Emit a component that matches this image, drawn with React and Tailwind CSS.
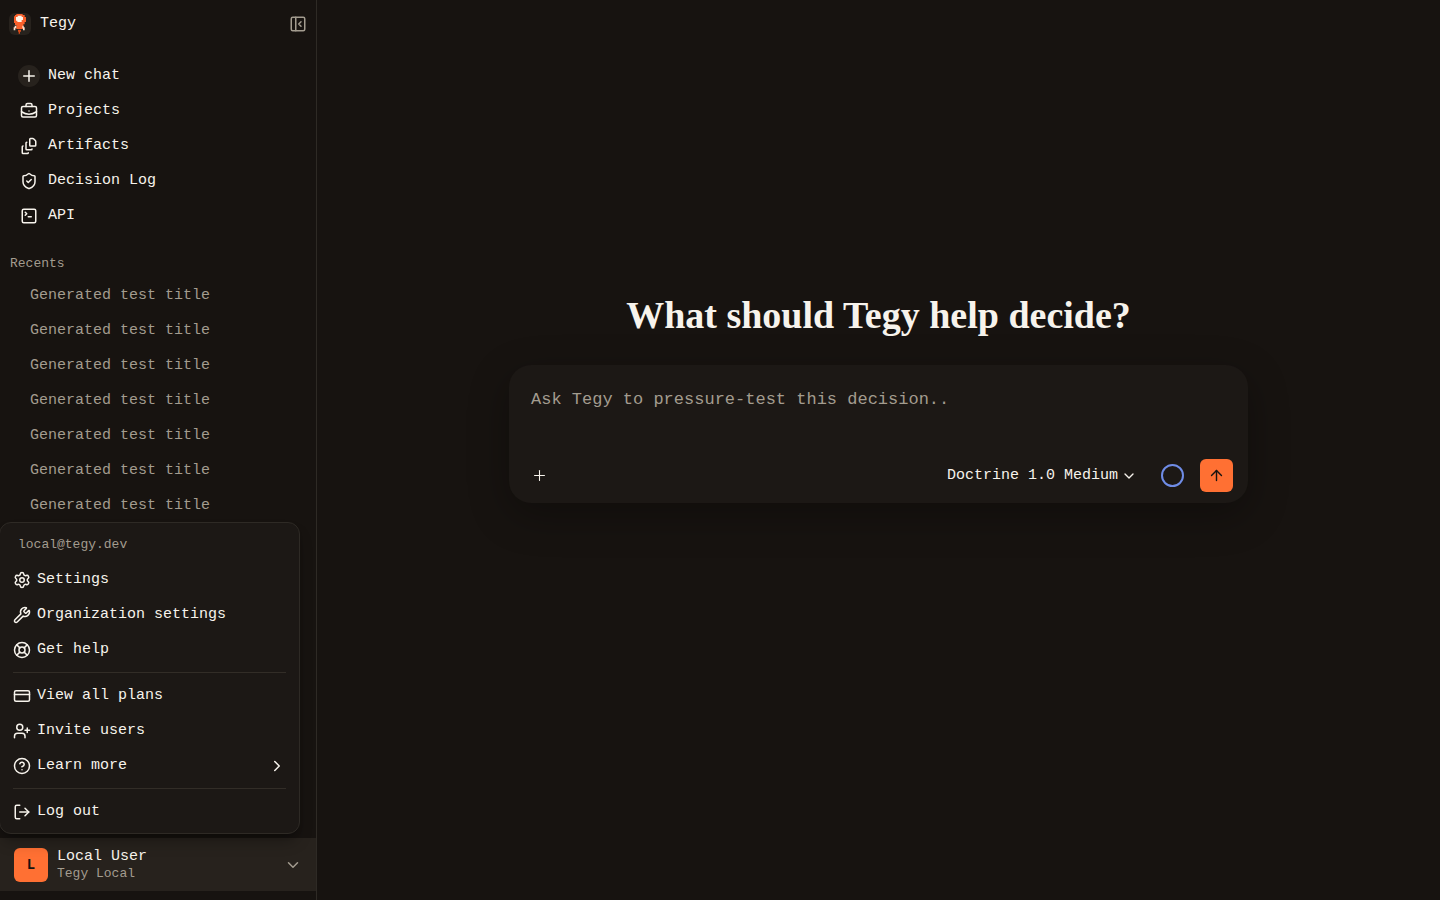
import { useState } from 'react'
import {
  ArrowUp, BriefcaseBusiness, ChevronDown, ChevronRight, CircleHelp, CreditCard, FileStack, LifeBuoy,
  LogOut, PanelLeftClose, Plus, Settings, ShieldCheck, SquareTerminal, UserPlus, Wrench,
} from 'lucide-react'

const NAV = [
  { label: 'New chat', icon: Plus, round: true },
  { label: 'Projects', icon: BriefcaseBusiness },
  { label: 'Artifacts', icon: FileStack },
  { label: 'Decision Log', icon: ShieldCheck },
  { label: 'API', icon: SquareTerminal },
]

const RECENTS = Array.from({ length: 7 }, (_, i) => ({ id: i + 1, title: 'Generated test title' }))

const MENU = [
  [
    { label: 'Settings', icon: Settings },
    { label: 'Organization settings', icon: Wrench },
    { label: 'Get help', icon: LifeBuoy },
  ],
  [
    { label: 'View all plans', icon: CreditCard },
    { label: 'Invite users', icon: UserPlus },
    { label: 'Learn more', icon: CircleHelp, more: true },
  ],
  [{ label: 'Log out', icon: LogOut }],
]

function Logo() {
  return (
    <svg viewBox="0 0 66 66" className="size-[22px] rounded-md bg-[#27221d]" aria-hidden="true">
      <path d="M22 3h19v3h6v6h4v15h-4v7h-4v14H22V36h-4v-6h-3V10h3V6h4z" fill="#f9602b" />
      <path d="M26 8h12v4h4v9h-4v6H25v-4h-4V12h5z" fill="#fff4e8" />
      <path d="M17 38h5v8h-3v6h-5V43h3zM40 38h4v5h3v9h-5v-6h-2z" fill="#ffe3d0" />
      <path d="M27 50h9v6h-3v6h-4v-6h-2z" fill="#d94b18" />
    </svg>
  )
}

function UserMenu() {
  return (
    <div className="absolute bottom-full -left-px mb-1 w-[301px] rounded-xl border border-[#2e2a25] bg-[#1c1815] p-1 shadow-lg shadow-black/30">
      <p className="px-3.5 text-[13px] leading-[35px] text-[#a39c8f]">local@tegy.dev</p>
      {MENU.map((group, i) => (
        <div key={i}>
          {i > 0 && <hr className="mx-[9px] my-[5px] border-[#322d27]" />}
          {group.map(item => (
            <button key={item.label} className="flex h-[35px] w-full items-center gap-1.5 rounded-lg px-[9px] text-left hover:bg-[#27221d] cursor-pointer">
              <item.icon size={18} />
              <span className="flex-1">{item.label}</span>
              {item.more && <ChevronRight size={18} />}
            </button>
          ))}
        </div>
      ))}
    </div>
  )
}

function Sidebar() {
  const [menuOpen, setMenuOpen] = useState(true)

  return (
    <aside className="flex w-[317px] shrink-0 flex-col border-r border-[#2e2a25] pb-[9px]">
      <div className="flex h-12 items-center justify-between px-[9px]">
        <div className="flex items-center gap-[9px]">
          <Logo />
          <span className="leading-6">Tegy</span>
        </div>
        <button aria-label="Collapse sidebar" className="text-[#a39c8f] cursor-pointer">
          <PanelLeftClose size={18} />
        </button>
      </div>

      <nav className="flex flex-col pt-[10px]">
        {NAV.map(item => (
          <a key={item.label} href="#" className="flex h-[35px] items-center gap-2 pl-[18px]">
            <span className={`flex size-[22px] items-center justify-center rounded-full ${item.round ? 'bg-[#27221d]' : ''}`}>
              <item.icon size={18} />
            </span>
            {item.label}
          </a>
        ))}
      </nav>

      <div className="pt-[21px] text-[#a39c8f]">
        <h2 className="pl-[10px] text-[13px] leading-5">Recents</h2>
        <div className="flex flex-col pt-1">
          {RECENTS.map(chat => (
            <a key={chat.id} href="#" className="h-[35px] pl-[30px] leading-[35px]">{chat.title}</a>
          ))}
        </div>
      </div>

      <div className="relative mt-auto">
        {menuOpen && <UserMenu />}
        <button
          onClick={() => setMenuOpen(open => !open)}
          aria-expanded={menuOpen}
          className="flex h-[53px] w-full items-center bg-[#27221d] px-3.5 text-left cursor-pointer"
        >
          <span className="flex size-[34px] items-center justify-center rounded-md bg-[#ff7033] text-sm font-bold text-[#171310]">L</span>
          <span className="flex flex-1 flex-col pl-[9px]">
            <span className="leading-[17px]">Local User</span>
            <span className="text-[13px] leading-[17px] text-[#a39c8f]">Tegy Local</span>
          </span>
          <ChevronDown size={18} className="text-[#a39c8f]" />
        </button>
      </div>
    </aside>
  )
}

function Composer() {
  const [text, setText] = useState('')

  return (
    <form onSubmit={e => e.preventDefault()} className="w-full max-w-[739px] rounded-[22px] bg-[#1c1815] pb-[11px] shadow-[0_12px_40px_rgba(0,0,0,0.3)]">
      <textarea
        value={text}
        onChange={e => setText(e.target.value)}
        aria-label="Message"
        placeholder="Ask Tegy to pressure-test this decision.."
        className="block h-[94px] w-full resize-none px-[22px] pt-[23px] text-[17px] leading-6 outline-none placeholder:text-[#a39c8f]"
      />
      <div className="flex h-[33px] items-center pl-[22px] pr-[15px]">
        <button type="button" aria-label="Add attachment" className="cursor-pointer">
          <Plus size={17} strokeWidth={1.5} />
        </button>
        <label className="ml-auto flex items-center gap-0.5">
          <select aria-label="Model" className="appearance-none outline-none cursor-pointer">
            <option>Doctrine 1.0 Medium</option>
          </select>
          <ChevronDown size={16} className="pointer-events-none" />
        </label>
        <span className="ml-6 size-[23px] rounded-full border-2 border-[#6f8ce6]" />
        <button aria-label="Send" className="ml-4 flex size-[33px] items-center justify-center rounded-md bg-[#ff7033] text-[#171310] cursor-pointer">
          <ArrowUp size={17} />
        </button>
      </div>
    </form>
  )
}

export default function App() {
  return (
    <div className="flex min-h-screen bg-[#171310] font-['Liberation_Mono',monospace] text-[15px] leading-5 text-[#f7f3ec]">
      <Sidebar />
      <main className="flex flex-1 flex-col items-center justify-center gap-7 px-6 pb-[104px]">
        <h1 className="text-center font-['Liberation_Serif',serif] text-[38px] font-bold leading-[44px]">What should Tegy help decide?</h1>
        <Composer />
      </main>
    </div>
  )
}
